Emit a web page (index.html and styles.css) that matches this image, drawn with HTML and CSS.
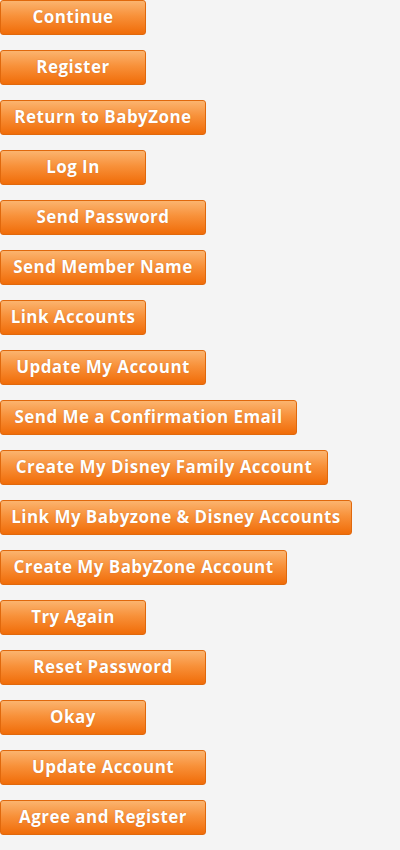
FILE: index.html
```html
<!DOCTYPE html>
<html lang="en">
<head>
  <meta charset="UTF-8" />
  <meta name="viewport" content="width=device-width, initial-scale=1.0" />
  <title>Buttons</title>
  <link rel="stylesheet" href="styles.css">
</head>
<body>
  <div class="list">
    <button class="btn w146">Continue</button>
    <button class="btn w146">Register</button>
    <button class="btn w206">Return to BabyZone</button>
    <button class="btn w146">Log In</button>
    <button class="btn w206">Send Password</button>
    <button class="btn w206">Send Member Name</button>
    <button class="btn w146">Link Accounts</button>
    <button class="btn w206">Update My Account</button>
    <button class="btn w297">Send Me a Confirmation Email</button>
    <button class="btn w328">Create My Disney Family Account</button>
    <button class="btn w352">Link My Babyzone &amp; Disney Accounts</button>
    <button class="btn w287">Create My BabyZone Account</button>
    <button class="btn w146">Try Again</button>
    <button class="btn w206">Reset Password</button>
    <button class="btn w146">Okay</button>
    <button class="btn w206">Update Account</button>
    <button class="btn w206">Agree and Register</button>
  </div>
</body>
</html>
```

FILE: styles.css
```css
body {
  margin: 0;
  background: #f4f4f4;
  font-family: "Open Sans", sans-serif;
}
.list {
  display: flex;
  flex-direction: column;
  align-items: flex-start;
  gap: 15px;
}
.btn {
  height: 35px;
  padding: 0 0 2px;
  border: 1px solid #e0680c;
  border-radius: 3px;
  background: linear-gradient(#fbb46f, #f8913a 45%, #f06c08);
  color: #fff;
  font-family: inherit;
  font-weight: bold;
  font-size: 17px;
  letter-spacing: 0.45px;
  text-align: center;
  text-shadow: 0 0 1px rgba(150, 60, 0, 0.5);
  white-space: nowrap;
  cursor: pointer;
}
.w146 { width: 146px; }
.w206 { width: 206px; }
.w287 { width: 287px; }
.w297 { width: 297px; }
.w328 { width: 328px; }
.w352 { width: 352px; }
```
